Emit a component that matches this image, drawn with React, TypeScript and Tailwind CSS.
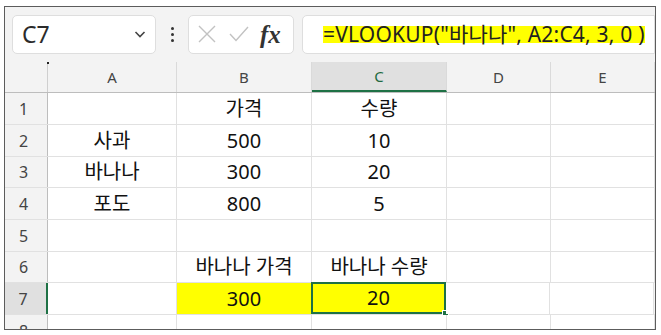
import React from 'react';

const FONT = '"Noto Sans", "Noto Sans CJK KR", sans-serif';

const cols = [
  { key: 'A', w: 'w-[129px]' },
  { key: 'B', w: 'w-[135px]' },
  { key: 'C', w: 'w-[135px]' },
  { key: 'D', w: 'w-[104px]' },
  { key: 'E', w: 'w-[104px]' },
];

const rows: { n: number; h: string; cells: string[] }[] = [
  { n: 1, h: 'h-[32px]', cells: ['', '가격', '수량', '', ''] },
  { n: 2, h: 'h-[32px]', cells: ['사과', '500', '10', '', ''] },
  { n: 3, h: 'h-[31px]', cells: ['바나나', '300', '20', '', ''] },
  { n: 4, h: 'h-[32px]', cells: ['포도', '800', '5', '', ''] },
  { n: 5, h: 'h-[32px]', cells: ['', '', '', '', ''] },
  { n: 6, h: 'h-[31px]', cells: ['', '바나나 가격', '바나나 수량', '', ''] },
  { n: 7, h: 'h-[32px]', cells: ['', '300', '20', '', ''] },
  { n: 8, h: 'h-[32px]', cells: ['', '', '', '', ''] },
];

export default function App() {
  return (
    <div className="w-[661px] h-[335px] bg-white overflow-hidden" style={{ fontFamily: FONT }}>
      <div className="ml-[4px] mt-[6px] w-[652px] h-[324px] border border-[#5c5c5c] bg-[#f3f3f3] overflow-hidden">
        {/* Formula bar */}
        <div className="flex items-center h-[54px] pl-[7px] gap-[6px]">
          <div className="flex items-center justify-between w-[144px] h-[39px] bg-white border border-[#dedede] rounded-[5px] pl-[9px] pr-[8px]">
            <span className="text-[23px] text-[#2b2b2b] leading-none">C7</span>
            <svg width="14" height="14" viewBox="0 0 14 14" fill="none" stroke="#444" strokeWidth="1.6">
              <path d="M2.5 5 L7 9.5 L11.5 5" />
            </svg>
          </div>
          <div className="flex flex-col items-center gap-[3px] w-[20px]">
            <span className="w-[3px] h-[3px] bg-[#333] rounded-full" />
            <span className="w-[3px] h-[3px] bg-[#333] rounded-full" />
            <span className="w-[3px] h-[3px] bg-[#333] rounded-full" />
          </div>
          <div className="flex items-center w-[106px] h-[39px] bg-white border border-[#dedede] rounded-[5px] pl-[7px] gap-[10px]">
            <svg width="22" height="22" viewBox="0 0 22 22" fill="none" stroke="#c2c2c2" strokeWidth="1.4">
              <path d="M3 3 L19 19 M19 3 L3 19" />
            </svg>
            <svg width="22" height="22" viewBox="0 0 22 22" fill="none" stroke="#c2c2c2" strokeWidth="1.4">
              <path d="M2 11 L8 17.5 L20 4" />
            </svg>
            <span
              className="text-[25px] italic font-semibold text-[#333] leading-none"
              style={{ fontFamily: '"Liberation Serif", serif' }}
            >
              fx
            </span>
          </div>
          <div className="flex items-center flex-1 h-[39px] bg-white border border-[#dedede] rounded-l-[5px] ml-[2px] pl-[20px]">
            <span className="bg-[#ffff00] text-[21px] leading-[17px] text-[#222] whitespace-nowrap tracking-[0.2px]">
              =VLOOKUP("바나나", A2:C4, 3, 0 )
            </span>
          </div>
        </div>

        {/* Grid */}
        <div className="mt-[1px]">
          {/* column header */}
          <div className="flex h-[31px] border-b border-[#bdbdbd]">
            <div className="w-[43px] shrink-0 border-r border-[#cfcfcf] relative">
              <span className="absolute right-[-2px] top-[0px] w-[2px] h-[2px] bg-[#222]" />
            </div>
            {cols.map((c) => (
              <div
                key={c.key}
                className={`${c.w} shrink-0 flex items-center justify-center border-r border-[#dadada] text-[15px] ${
                  c.key === 'C'
                    ? 'bg-[#e0e0e0] text-[#1e6b41] border-b-2 border-b-[#1e7145]'
                    : 'text-[#444]'
                }`}
              >
                {c.key}
              </div>
            ))}
          </div>

          {rows.map((r) => (
            <div key={r.n} className={`flex ${r.h} border-b border-[#e1e1e1]`}>
              <div
                className={`w-[43px] shrink-0 flex items-center justify-center pr-[5px] text-[16px] text-[#444] ${
                  r.n === 7
                    ? 'bg-[#e0e0e0] border-r-2 border-[#1e7145] text-[#1e6b41]'
                    : 'border-r border-[#bdbdbd]'
                }`}
              >
                {r.n}
              </div>
              {cols.map((c, i) => {
                const isYellow = r.n === 7 && (c.key === 'B' || c.key === 'C');
                const selected = r.n === 7 && c.key === 'C';
                return (
                  <div
                    key={c.key}
                    className={`${c.w} shrink-0 relative flex items-center justify-center text-[20px] text-[#111] whitespace-nowrap ${
                      isYellow ? 'bg-[#ffff00]' : 'bg-white'
                    } ${selected ? 'border-2 border-[#1e7145] -mt-[1px] -ml-[1px]' : 'border-r border-[#e1e1e1]'}`}
                  >
                    {r.cells[i]}
                    {selected && (
                      <span className="absolute right-[-5px] bottom-[-5px] w-[7px] h-[7px] bg-[#1e7145] border border-white" />
                    )}
                  </div>
                );
              })}
            </div>
          ))}
        </div>
      </div>
    </div>
  );
}
